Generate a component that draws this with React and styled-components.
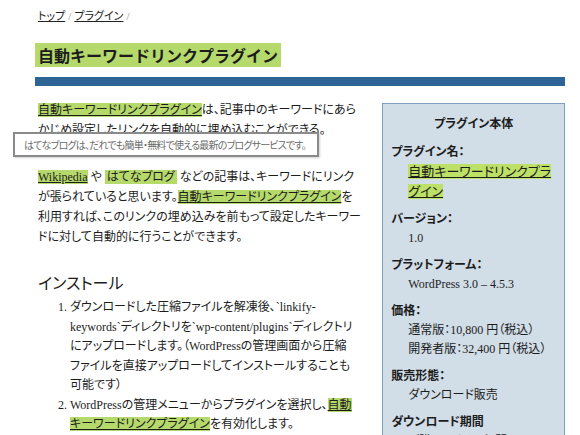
import React from "react";
import styled, { createGlobalStyle } from "styled-components";

const Global = createGlobalStyle`
  html, body { margin: 0; padding: 0; background: #fff; }
  body {
    font-family: "Liberation Serif", "Noto Sans CJK JP", serif;
    color: #1c1c1c;
    font-feature-settings: "palt";
  }
`;

const Page = styled.div`
  width: 530px;
  padding: 8px 0 0 35px;
`;

const Breadcrumb = styled.nav`
  padding-left: 3px;
  font-size: 11px;
  line-height: 16px;
`;

const Crumb = styled.a`
  color: #222;
  text-decoration: underline;
`;

const Sep = styled.span`
  color: #888;
  margin: 0 3px;
`;

const Title = styled.h1`
  margin: 20px 0 0;
  font-family: "Noto Sans CJK JP", sans-serif;
  font-feature-settings: normal;
  font-size: 16px;
  font-weight: bold;
  line-height: 23px;
`;

const TitleMark = styled.span`
  background: #b5d96b;
  padding: 0 3px;
`;

const Bar = styled.div`
  margin-top: 10px;
  height: 9px;
  background: #2e6496;
`;

const Main = styled.div`
  display: flex;
  align-items: flex-start;
  margin-top: 14px;
`;

const Content = styled.div`
  position: relative;
  width: 324px;
  padding-left: 3px;
  font-size: 12px;
  line-height: 20px;
`;

const P = styled.p`
  margin: 0;
  & + & { margin-top: 27px; }
`;

const Mark = styled.a`
  background: ${(p) => (p.$side ? "#bde067" : "#b5d96b")};
  color: #1c1c1c;
  font-size: ${(p) => (p.$side ? "13px" : "inherit")};
  text-decoration: ${(p) => (p.$plain ? "none" : "underline")};
  padding: ${(p) => (p.$plain ? "0 2px" : "0")};
`;

const Tooltip = styled.div`
  position: absolute;
  left: -22px;
  top: 32px;
  width: 306px;
  height: 25px;
  box-sizing: border-box;
  border: 2px solid #8a8a8a;
  background: #fff;
  box-shadow: 1px 1px 2px rgba(0, 0, 0, 0.18);
  padding-left: 9px;
  font-family: "Noto Sans CJK JP", sans-serif;
  font-size: 10px;
  letter-spacing: -0.8px;
  line-height: 21px;
  color: #6a6a6a;
  white-space: nowrap;
`;

const H2 = styled.h2`
  margin: 23px 0 4px;
  font-family: "Noto Sans CJK JP", sans-serif;
  font-size: 16px;
  font-weight: normal;
  line-height: 24px;
`;

const OL = styled.ol`
  margin: 0;
  padding: 0 5px 0 32px;
  line-height: 19.5px;
`;

const Sidebar = styled.aside`
  box-sizing: border-box;
  width: 183px;
  margin: 3px 0 0 21px;
  padding: 10px 8px 20px;
  background: #d1dde7;
  border: 1px solid #7f9fbf;
`;

const SideTitle = styled.div`
  text-align: center;
  font-size: 12px;
  font-weight: bold;
  line-height: 20px;
  margin-bottom: 8px;
`;

const DL = styled.dl`
  margin: 0;
`;

const DT = styled.dt`
  font-size: 12px;
  font-weight: bold;
  line-height: 20px;
`;

const DD = styled.dd`
  margin: 0 0 7px 17px;
  font-size: 12px;
  line-height: 19px;
`;

const info = [
  { k: "プラグイン名：", v: [<Mark key="l" $side href="#">自動キーワードリンクプラグイン</Mark>] },
  { k: "バージョン：", v: ["1.0"] },
  { k: "プラットフォーム：", v: ["WordPress 3.0 – 4.5.3"] },
  { k: "価格：", v: ["通常版：10,800 円（税込）", <br key="b" />, "開発者版：32,400 円（税込）"] },
  { k: "販売形態：", v: ["ダウンロード販売"] },
  { k: "ダウンロード期間", v: ["ご購入日から1年間"] },
];

export default function App() {
  return (
    <Page>
      <Global />
      <Breadcrumb>
        <Crumb href="#">トップ</Crumb>
        <Sep>/</Sep>
        <Crumb href="#">プラグイン</Crumb>
        <Sep>/</Sep>
      </Breadcrumb>
      <Title>
        <TitleMark>自動キーワードリンクプラグイン</TitleMark>
      </Title>
      <Bar />
      <Main>
        <Content>
          <P>
            <Mark href="#">自動キーワードリンクプラグイン</Mark>は、記事中のキーワードにあらかじめ設定したリンクを自動的に埋め込むことができる。
          </P>
          <P>
            <Mark href="#">Wikipedia</Mark> や <Mark $plain href="#">はてなブログ</Mark> などの記事は、キーワードにリンクが張られていると思います。<Mark href="#">自動キーワードリンクプラグイン</Mark>を利用すれば、このリンクの埋め込みを前もって設定したキーワードに対して自動的に行うことができます。
          </P>
          <Tooltip>はてなブログは、だれでも簡単・無料で使える最新のブログサービスです。</Tooltip>
          <H2>インストール</H2>
          <OL>
            <li>
              ダウンロードした圧縮ファイルを解凍後、`linkify-keywords`ディレクトリを`wp-content/plugins`ディレクトリにアップロードします。（WordPressの管理画面から圧縮ファイルを直接アップロードしてインストールすることも可能です）
            </li>
            <li>
              WordPressの管理メニューからプラグインを選択し、<Mark href="#">自動キーワードリンクプラグイン</Mark>を有効化します。
            </li>
            <li>
              WordPressの設定メニューから自動キーワードリンクを選択して設定します。
            </li>
          </OL>
        </Content>
        <Sidebar>
          <SideTitle>プラグイン本体</SideTitle>
          <DL>
            {info.map((row) => (
              <React.Fragment key={row.k}>
                <DT>{row.k}</DT>
                <DD>{row.v}</DD>
              </React.Fragment>
            ))}
          </DL>
        </Sidebar>
      </Main>
    </Page>
  );
}
